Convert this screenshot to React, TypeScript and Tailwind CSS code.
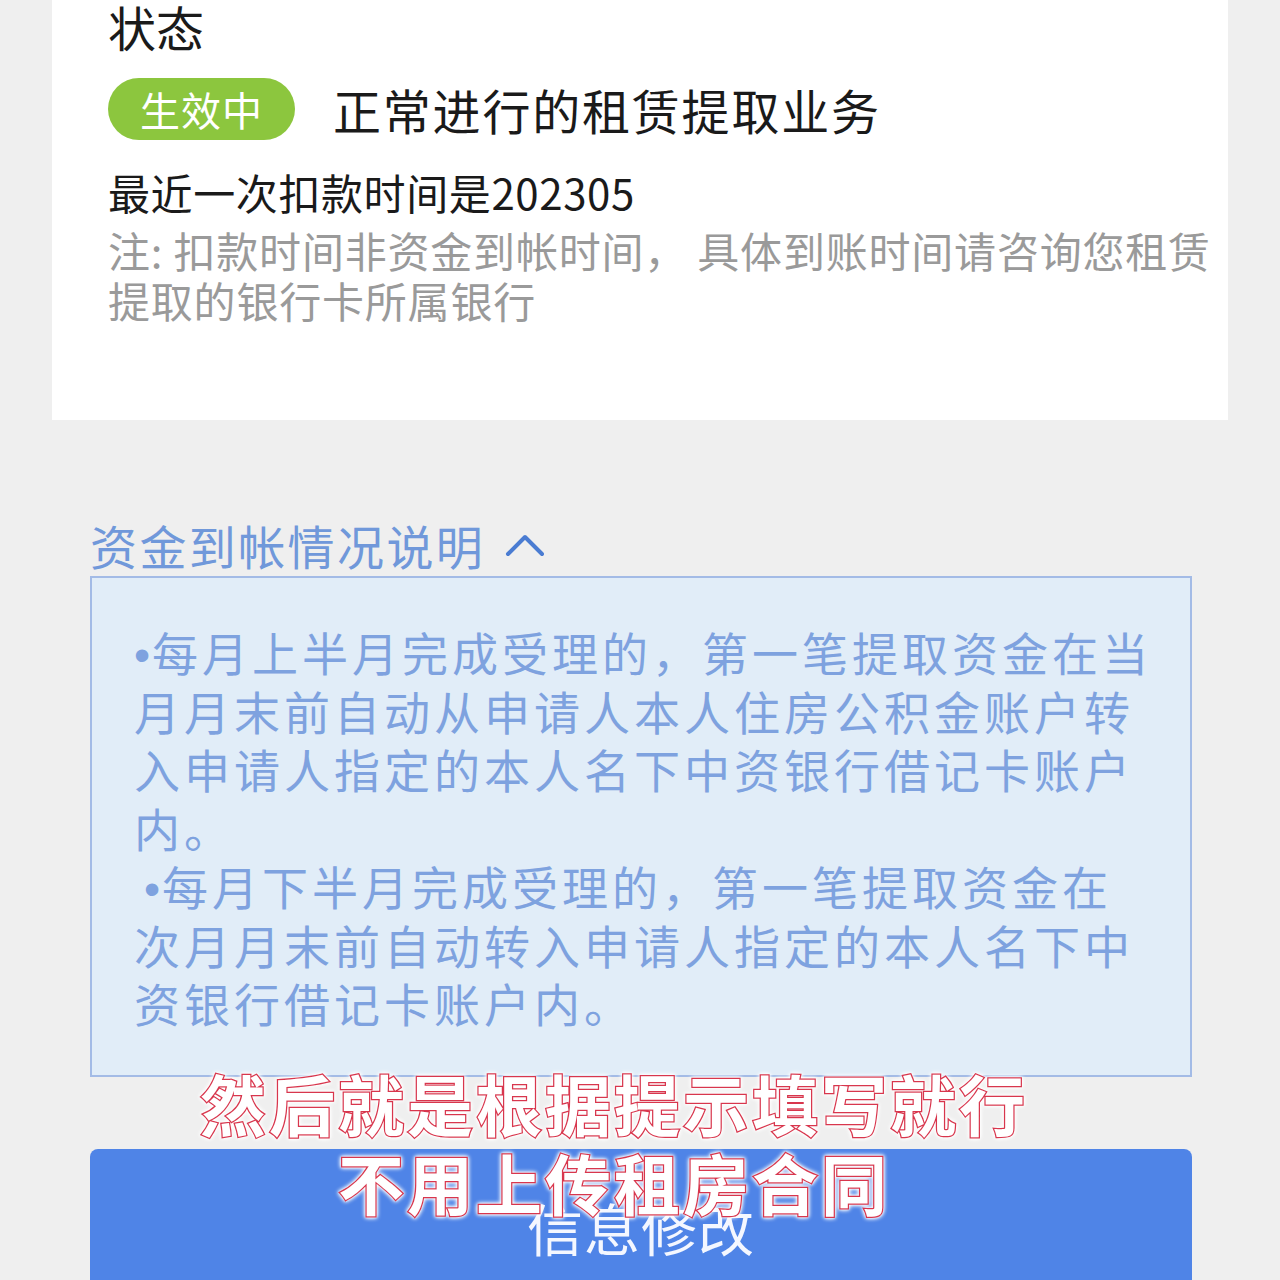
import React from 'react';

const cjk = "font-['Noto_Sans_CJK_SC','Noto_Sans',sans-serif]";

function Dot() {
  return <span className="font-['Liberation_Sans',sans-serif] leading-none tracking-[2px]">•</span>;
}

function App() {
  return (
    <div className={`relative w-[1280px] h-[1280px] overflow-hidden bg-[#efefef] ${cjk}`}>
      {/* status card */}
      <div className="ml-[52px] w-[1176px] h-[420px] bg-white pl-[56px] pt-[2px]">
        <div className="text-[48px] leading-none text-[#1a1a1a]">状态</div>

        <div className="mt-[28px] flex items-center">
          <span className="w-[187px] h-[62px] rounded-full bg-[#8cc63e] text-white text-[40px] leading-none tracking-[1px] flex items-center justify-center">
            生效中
          </span>
          <span className="ml-[38px] text-[48px] leading-none tracking-[1.8px] text-[#1a1a1a]">
            正常进行的租赁提取业务
          </span>
        </div>

        <div className="mt-[31px] text-[42px] leading-none tracking-[0.6px] text-[#1a1a1a]">
          最近一次扣款时间是202305
        </div>

        <p className="mt-[12px] text-[42px] leading-[50px] tracking-[0.8px] text-[#9a9a9a] whitespace-nowrap">
          注: 扣款时间非资金到帐时间， 具体到账时间请咨询您租赁
          <br />
          提取的银行卡所属银行
        </p>
      </div>

      {/* explanation */}
      <div className="ml-[90px] w-[1102px]">
        <div className="mt-[101px] flex items-center text-[47px] leading-none tracking-[2.4px] text-[#7098da]">
          资金到帐情况说明
          <svg width="40" height="24" viewBox="0 0 40 24" className="ml-[20px]">
            <path d="M3 21 L20 4 L37 21" fill="none" stroke="#4a7cd2" strokeWidth="4" strokeLinecap="round" strokeLinejoin="round" />
          </svg>
        </div>

        <div className="mt-[8px] border-2 border-[#a3bbe6] bg-[#e1edf8] pl-[42px] pt-[44px] pb-[43px] text-[46px] leading-[58.5px] tracking-[4px] text-[#7ea2df] whitespace-nowrap">
          <p>
            <Dot />每月上半月完成受理的，第一笔提取资金在当
            <br />
            月月末前自动从申请人本人住房公积金账户转
            <br />
            入申请人指定的本人名下中资银行借记卡账户
            <br />
            内。
          </p>
          <p>
            <span className="inline-block w-[10px]" />
            <Dot />每月下半月完成受理的，第一笔提取资金在
            <br />
            次月月末前自动转入申请人指定的本人名下中
            <br />
            资银行借记卡账户内。
          </p>
        </div>

        <button
          type="button"
          className="mt-[72px] w-full h-[160px] rounded-t-lg bg-[#4f84e7] text-[#f4f7ff] text-[56px] leading-none tracking-[1px] flex justify-center pt-[50px]"
        >
          信息修改
        </button>
      </div>

      {/* video caption overlay */}
      <div className="absolute left-0 right-0 top-[1063px] pr-[52px] text-center text-[66px] leading-[79px] tracking-[3px] font-bold text-white [-webkit-text-stroke:2.5px_#d8364d] [paint-order:stroke_fill] [filter:drop-shadow(0_0_2px_#ffffff)_drop-shadow(0_0_1px_#ffffff)]">
        <div>然后就是根据提示填写就行</div>
        <div>不用上传租房合同</div>
      </div>
    </div>
  );
}

export default App;
